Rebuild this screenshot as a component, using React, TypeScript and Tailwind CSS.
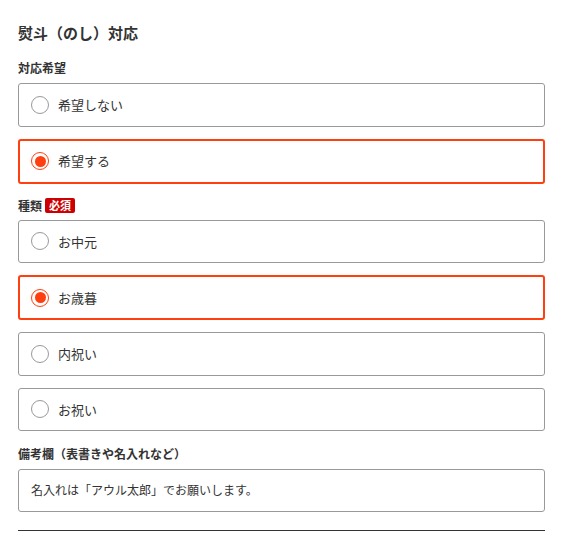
import { useState } from 'react';

const font = { fontFamily: '"Noto Sans CJK JP", "Noto Sans", sans-serif' };

function Radio({ checked }: { checked: boolean }) {
    return checked ? (
        <span className="w-[18px] h-[18px] rounded-full border border-[#ff3f0f] flex items-center justify-center shrink-0">
            <span className="w-[11px] h-[11px] rounded-full bg-[#ff3f0f]" />
        </span>
    ) : (
        <span className="w-[18px] h-[18px] rounded-full border border-[#999] bg-white shrink-0" />
    );
}

function Option({ label, checked, onClick }: { label: string; checked: boolean; onClick: () => void }) {
    return (
        <div
            onClick={onClick}
            className={
                checked
                    ? 'h-[45px] rounded-[3px] border-2 border-[#ff3f0f] pl-[11px] flex items-center gap-[9px] cursor-pointer'
                    : 'h-[43.5px] rounded-[3px] border border-[#999] pl-[12px] flex items-center gap-[9px] cursor-pointer'
            }
        >
            <Radio checked={checked} />
            <span className="text-[13px] text-[#333]">{label}</span>
        </div>
    );
}

export default function App() {
    const [wish, setWish] = useState('希望する');
    const [kind, setKind] = useState('お歳暮');

    return (
        <div className="w-[567px] min-h-[542px] bg-white pl-[18px] pr-[22px] pt-[22px]" style={font}>
            <h2 className="text-[15px] leading-[22px] font-bold text-[#333]">熨斗（のし）対応</h2>

            <div className="mt-[15px] mb-[6px] h-[18px] flex items-center text-[12px] font-bold text-[#333]">対応希望</div>
            <div className="flex flex-col gap-3">
                {['希望しない', '希望する'].map((v) => (
                    <Option key={v} label={v} checked={wish === v} onClick={() => setWish(v)} />
                ))}
            </div>

            <div className="mt-[13px] mb-[5px] h-[18px] flex items-center text-[12px] font-bold text-[#333]">
                種類
                <span className="ml-[3px] h-[15px] px-[4px] rounded-[2px] bg-[#cc0000] text-white text-[11px] leading-[15px] font-bold">
                    必須
                </span>
            </div>
            <div className="flex flex-col gap-3">
                {['お中元', 'お歳暮', '内祝い', 'お祝い'].map((v) => (
                    <Option key={v} label={v} checked={kind === v} onClick={() => setKind(v)} />
                ))}
            </div>

            <div className="mt-[13.5px] mb-[6px] h-[18px] flex items-center text-[12px] font-bold text-[#333]">
                備考欄（表書きや名入れなど）
            </div>
            <div className="h-[43px] rounded-[3px] border border-[#999] px-[12px] flex items-center text-[12px] text-[#333]">
                名入れは「アウル太郎」でお願いします。
            </div>

            <div className="mt-[18px] h-px bg-[#333]" />
        </div>
    );
}
